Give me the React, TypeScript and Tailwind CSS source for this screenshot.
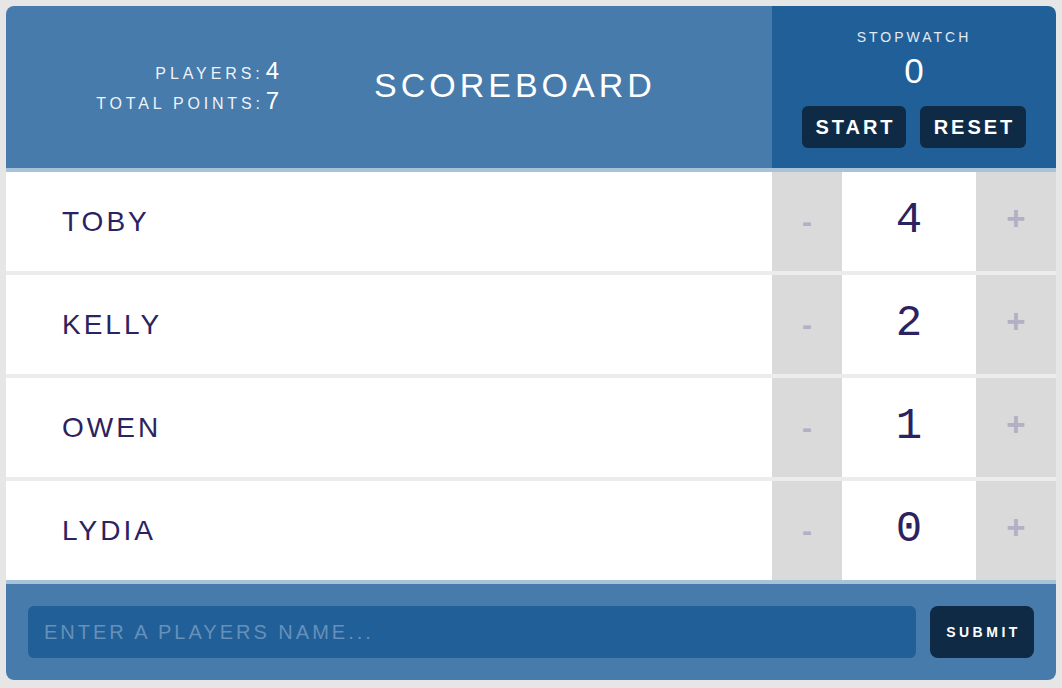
import { useState } from "react";

type Player = { id: number; name: string; score: number };

const INITIAL: Player[] = [
  { id: 1, name: "Toby", score: 4 },
  { id: 2, name: "Kelly", score: 2 },
  { id: 3, name: "Owen", score: 1 },
  { id: 4, name: "Lydia", score: 0 },
];

export default function App() {
  const [players, setPlayers] = useState<Player[]>(INITIAL);
  const [name, setName] = useState("");
  const [elapsed, setElapsed] = useState(0);

  const total = players.reduce((sum, p) => sum + p.score, 0);

  const change = (id: number, delta: number) =>
    setPlayers((prev) => prev.map((p) => (p.id === id ? { ...p, score: p.score + delta } : p)));

  const addPlayer = () => {
    if (!name.trim()) return;
    setPlayers((prev) => [...prev, { id: Date.now(), name: name.trim(), score: 0 }]);
    setName("");
  };

  return (
    <div className="min-h-screen bg-[#e6e6e6] pt-[6px] px-[6px] font-['Liberation_Sans',Arial,sans-serif]">
      <div className="rounded-lg overflow-hidden bg-white">
        {/* header */}
        <div className="flex h-[166px] border-b-4 border-[#a8c2d7]">
          <div className="flex-1 flex items-center bg-[#467bab] text-white">
            <div className="w-[273px] text-right mb-[8px]">
              <div className="flex items-baseline justify-end h-[30px]">
                <span className="text-[16px] tracking-[3.9px] text-[#eef3f8]">PLAYERS:</span>
                <span className="text-[24px] ml-[2px]">{players.length}</span>
              </div>
              <div className="flex items-baseline justify-end h-[30px]">
                <span className="text-[16px] tracking-[3.8px] text-[#eef3f8]">TOTAL POINTS:</span>
                <span className="text-[24px] ml-[2px]">{total}</span>
              </div>
            </div>
            <h1 className="ml-[95px] mb-[4px] text-[34px] tracking-[4px] leading-none">SCOREBOARD</h1>
          </div>
          <div className="w-[284px] bg-[#215f98] flex flex-col items-center text-white pt-[17px]">
            <div className="text-[14px] tracking-[3px] leading-[28px] text-[#e3ebf3]">STOPWATCH</div>
            <div className="text-[35px] leading-[40px]">{elapsed}</div>
            <div className="flex gap-[14px] mt-[15px]">
              <button className="h-[42px] w-[104px] rounded-md bg-[#0e2a45] text-[20px] font-bold tracking-[3px] pl-[3px]">
                START
              </button>
              <button
                onClick={() => setElapsed(0)}
                className="h-[42px] w-[106px] rounded-md bg-[#0e2a45] text-[20px] font-bold tracking-[3px] pl-[3px]"
              >
                RESET
              </button>
            </div>
          </div>
        </div>

        {/* players */}
        <div>
          {players.map((p, i) => (
            <div
              key={p.id}
              className={`flex h-[99px] ${i < players.length - 1 ? "border-b-4 border-[#ececec] h-[103px]" : ""}`}
            >
              <div className="flex-1 flex items-center pl-[56px] text-[28px] tracking-[3px] text-[#2b2361] uppercase">
                {p.name}
              </div>
              <div className="flex">
                <button
                  onClick={() => change(p.id, -1)}
                  className="w-[70px] bg-[#dadada] text-[#b2b0c4] text-[30px] font-bold"
                >
                  -
                </button>
                <div className="w-[134px] flex items-center justify-center pb-[4px] text-[44px] text-[#2b2361] font-['Liberation_Mono',monospace]">
                  {p.score}
                </div>
                <button
                  onClick={() => change(p.id, 1)}
                  className="w-[80px] bg-[#dadada] text-[#b2b0c4] text-[33px] font-bold pb-[6px]"
                >
                  +
                </button>
              </div>
            </div>
          ))}
        </div>

        {/* add player */}
        <div className="flex gap-[14px] border-t-4 border-[#a8c2d7] bg-[#467bab] p-[22px]">
          <input
            value={name}
            onChange={(e) => setName(e.target.value)}
            placeholder="ENTER A PLAYERS NAME..."
            className="flex-1 h-[52px] rounded-md bg-[#215f98] px-[16px] text-[20px] tracking-[3px] text-white placeholder:text-[#6690b9] outline-none"
          />
          <button
            onClick={addPlayer}
            className="w-[104px] h-[52px] rounded-lg bg-[#0e2a45] text-white text-[14px] font-bold tracking-[3.5px] pl-[3px]"
          >
            SUBMIT
          </button>
        </div>
      </div>
    </div>
  );
}
